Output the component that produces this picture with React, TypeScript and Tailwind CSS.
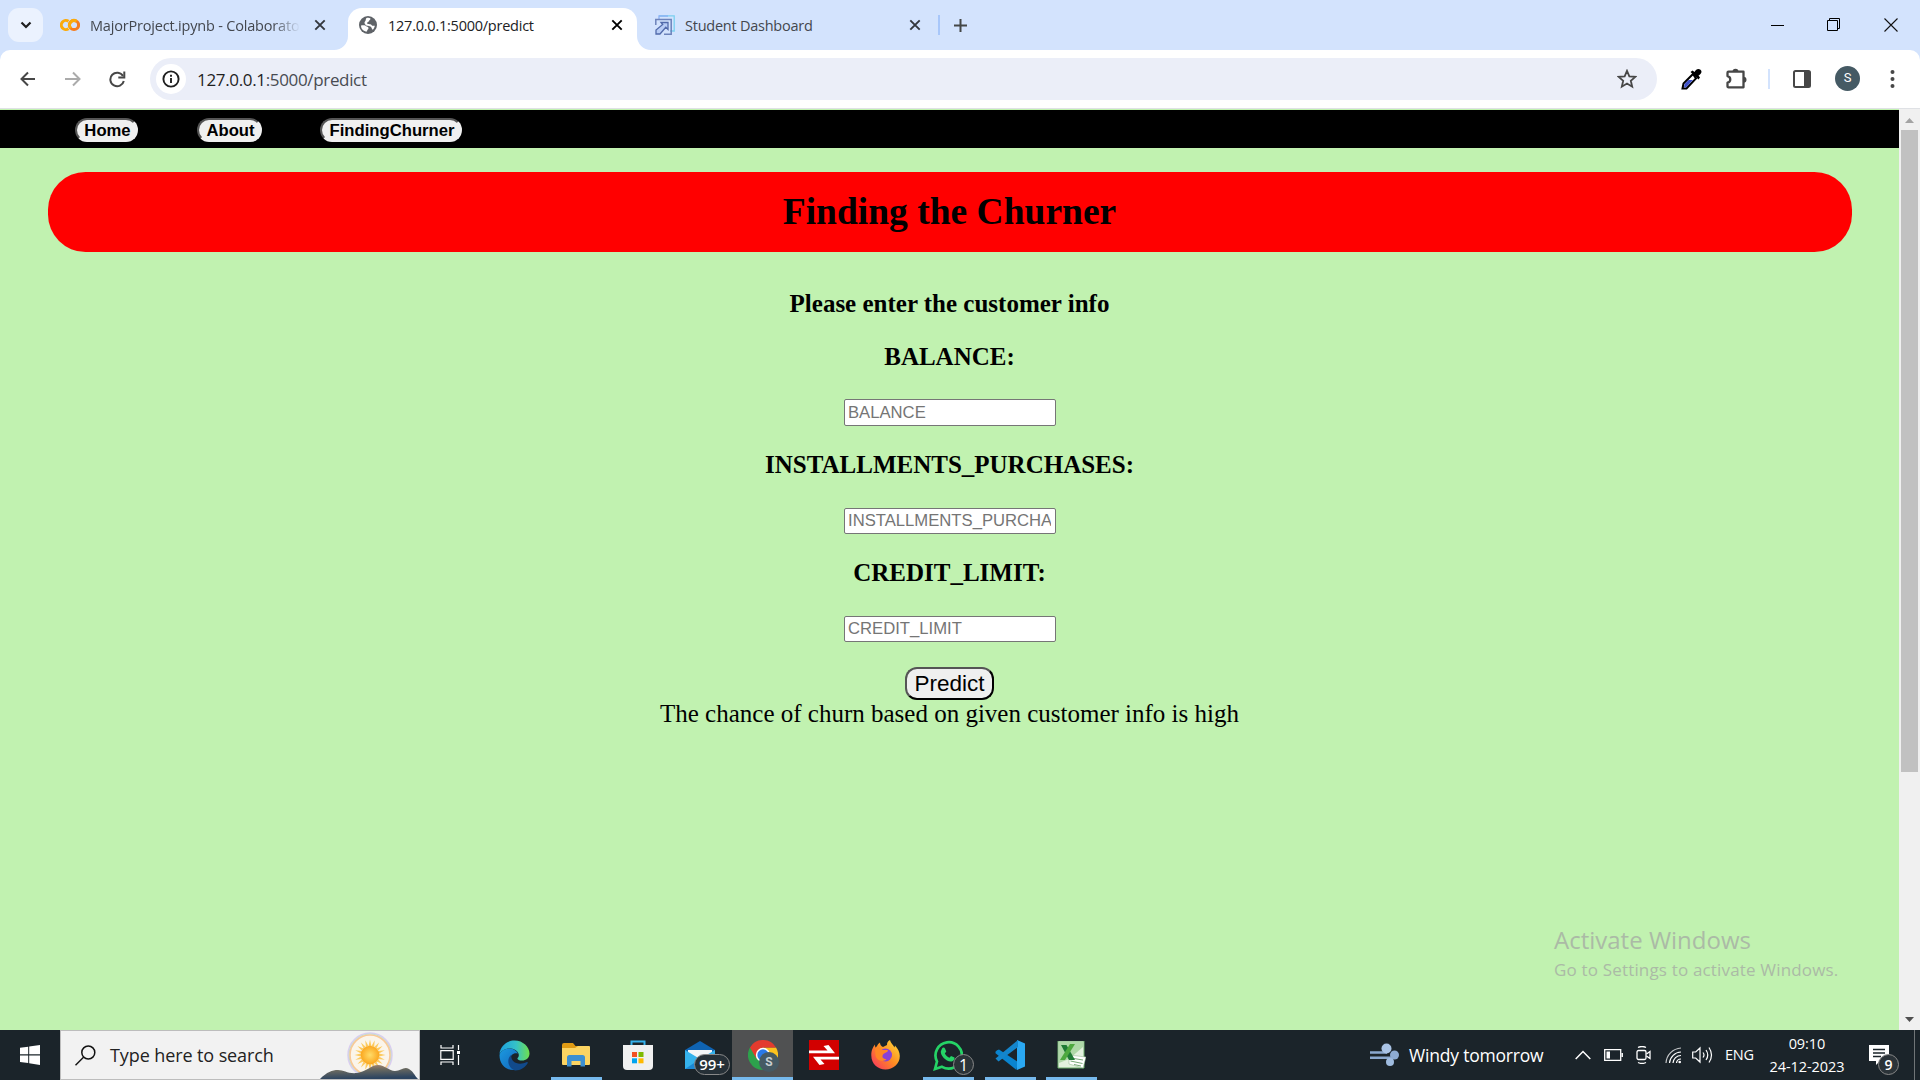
import type { ReactNode } from 'react';

const ui = "font-['Open_Sans','Noto_Sans',sans-serif]";

function CloseX({ className = 'text-[#33373d]' }: { className?: string }) {
  return (
    <svg width="12" height="12" viewBox="0 0 12 12" className={className}>
      <path d="M1.3 1.3 10.7 10.7M10.7 1.3 1.3 10.7" stroke="currentColor" strokeWidth="1.900" fill="none" />
    </svg>
  );
}

function TabStrip() {
  return (
    <div className="flex h-[50px] bg-[#d3e3fd]">
      <div className="flex w-[348px] items-center pl-2">
        <button className="flex h-[34px] w-[35px] items-center justify-center rounded-[11px] bg-[#ebf2fe]">
          <svg width="12" height="8" viewBox="0 0 12 8">
            <path d="M1.5 1.5 6 6l4.500-4.500" stroke="#1f1f1f" strokeWidth="2.200" fill="none" />
          </svg>
        </button>
        <svg className="ml-[17px]" width="20" height="14" viewBox="0 0 20 14">
          <circle cx="14" cy="7" r="4.600" stroke="#f57c1d" strokeWidth="3" fill="none" />
          <path d="M8.500 3.200A4.600 4.600 0 1 0 8.500 10.800" stroke="#fbab0a" strokeWidth="3" fill="none" />
          <path d="M10.700 10.200A4.600 4.600 0 0 1 16.500 3.200" stroke="#fbab0a" strokeWidth="3" fill="none" />
        </svg>
        <div className="ml-[10px] w-[210px] pt-px text-[14.500px] tracking-[-0.190px] whitespace-nowrap text-[#43474e] [mask-image:linear-gradient(to_right,black_87%,transparent_100%)]">
          MajorProject.ipynb - Colaborato
        </div>
        <span className="ml-[14px]"><CloseX /></span>
      </div>
      <div className="relative mt-2 flex h-[42px] w-[289px] items-center rounded-t-[14px] bg-white pr-[14px] pb-2 pl-[11px]">
        <svg className="absolute bottom-0 left-[-14px]" width="14" height="14"><path d="M14 0v14H0A14 14 0 0 0 14 0" fill="#fff" /></svg>
        <svg className="absolute right-[-14px] bottom-0" width="14" height="14"><path d="M0 0v14h14A14 14 0 0 1 0 0" fill="#fff" /></svg>
        <svg width="18" height="18" viewBox="0 0 18 18">
          <circle cx="9" cy="9" r="9" fill="#5f6368" />
          <path d="M2 9.500c2-.5 4.500-.5 5 .5s2.500.5 2.500 2-1.500 1.500-1.500 3.500C4.500 15.500 2 13 2 9.500ZM7.500 2c2-.5 3 0 4 .5 0 1.500-1.500 1.500-1.500 2.500S8 6 8 7.200s3.500.3 4.500 1.800 2.500.5 3.300.8c-.3 1.700-1 3-2 4-1-.5-1-2-2-3s-3.300-.2-4.800-1.500S5 6.500 6 5.500 6.500 3 7.500 2Z" fill="#fff" />
        </svg>
        <span className="ml-[11px] pt-px text-[14.500px] tracking-[-0.240px] text-[#202124]">127.0.0.1:5000/predict</span>
        <span className="ml-auto"><CloseX className="text-black" /></span>
      </div>
      <div className="flex flex-1 items-center pl-[18px]">
        <svg width="20" height="20" viewBox="0 0 20 20" fill="none">
          <path d="M4 .8h15.200V16H15" stroke="#7bd0f0" strokeWidth="1.300" />
          <path d="M4 4V1h9" stroke="#8cb2f4" strokeWidth="1.300" />
          <path d="M.8 10V4.500h15.400v14.700H9" stroke="#6d83bb" strokeWidth="1.500" />
          <path d="M6 7.500h7v7l-2.200-2.200L5 19H1v-4l6.700-5.500Z" fill="#b8cdf6" stroke="#526bab" strokeWidth="1.300" />
        </svg>
        <span className="ml-[10px] w-[224px] pt-px text-[14.500px] tracking-[-0.240px] text-[#43474e]">Student Dashboard</span>
        <CloseX />
        <span className="ml-[17px] h-5 w-[2px] bg-[#a8c7fa]" />
        <svg className="ml-[14px]" width="13" height="13"><path d="M6.500 0v13M0 6.500h13" stroke="#444746" strokeWidth="2" /></svg>
        <div className="mr-[22px] ml-auto flex items-center">
          <svg width="14" height="14"><path d="M1 7.500h13" stroke="#000" /></svg>
          <svg className="ml-[43px]" width="14" height="14" fill="none" stroke="#000"><path d="M.5 2.500h10v10H.5ZM2.500 2.500v-2h10v10h-2" /></svg>
          <svg className="ml-[43px]" width="14" height="14"><path d="m.5.5 13 13m0-13-13 13" stroke="#111" strokeWidth="1.100" /></svg>
        </div>
      </div>
    </div>
  );
}

function Toolbar() {
  return (
    <div className="bg-[#d3e3fd]">
      <div className="flex h-[59px] items-center rounded-t-[10px] border-b border-[#dfe1e5] bg-white pl-5">
        <svg width="16" height="16" fill="none" stroke="#474747" strokeWidth="2"><path d="M15 8H2M8 1.500 1.500 8 8 14.500" /></svg>
        <svg className="ml-[29px]" width="16" height="16" fill="none" stroke="#ababab" strokeWidth="2"><path d="M0 8h13.500M8 1.500 14.500 8 8 14.500" /></svg>
        <svg className="ml-[28px]" width="17" height="17" viewBox="0 0 17 17" fill="none" stroke="#474747" strokeWidth="2"><path d="M14 5A6.800 6.800 0 1 0 14.800 10" /><path d="M15.300.5v6H9.300" /></svg>
        <div className="ml-[24px] flex h-[42px] w-[1507px] items-center rounded-full bg-[#ebeef8] pr-5 pl-[6px]">
          <span className="flex size-[30px] items-center justify-center rounded-full bg-white">
            <svg width="18" height="18"><circle cx="9" cy="9" r="7.600" fill="none" stroke="#1f1f1f" strokeWidth="1.900" /><path d="M9 8v5M9 4.700v2" stroke="#1f1f1f" strokeWidth="1.900" /></svg>
          </span>
          <span className="ml-[11px] pt-px text-[17px] tracking-[-0.340px] text-[#484b52]"><span className="text-[#1f1f1f]">127.0.0.1</span>:5000/predict</span>
          <svg className="ml-auto" width="20" height="20" viewBox="0 0 20 20"><path d="m10 1.800 2.350 5.550 6 .5-4.550 3.950 1.380 5.850L10 14.550 4.820 17.650 6.200 11.800 1.650 7.850l6-.5Z" fill="none" stroke="#474747" strokeWidth="1.800" /></svg>
        </div>
        <svg className="ml-[24px]" width="21" height="22" viewBox="0 0 21 22">
          <path d="M12 6 2.500 15.500 1.500 20.500h4L15 10.500Z" fill="#fff" stroke="#000" strokeWidth="2" />
          <path d="M7.500 12h4.500l-7 7.500H3l.5-3.500Z" fill="#3f51c8" />
          <path d="m9.500 4 2-1.500 2 1.500C15 1 17.500 0 19.500 1.800s.8 4-2 5.700l1.500 2-1.500 2Z" fill="#000" />
        </svg>
        <svg className="ml-[24px]" width="22" height="22" viewBox="0 0 22 22">
          <path d="M2.500 3.700h15v15.600h-15q-1 0-1-1v-3.600c3.700-1 3.700-5.600 0-6.600V4.700q0-1 1-1Z" fill="none" stroke="#474747" strokeWidth="2.300" strokeLinejoin="round" />
          <path d="M6.500 3.700a3 3 0 0 1 6 0M17.500 8.700a3 3 0 0 1 0 6" fill="#474747" />
        </svg>
        <span className="ml-[20px] h-5 w-[2px] bg-[#d3e3fd]" />
        <svg className="ml-[23px]" width="18" height="18"><rect x="1" y="1" width="16" height="16" rx="1.500" fill="none" stroke="#474747" strokeWidth="2" /><path d="M11 1h6v16h-6Z" fill="#474747" /></svg>
        <span className="ml-[24px] flex size-[25px] -translate-y-px items-center justify-center rounded-full bg-[#455a64] font-['Roboto',sans-serif] text-[13px] text-white">S</span>
        <svg className="ml-[30px]" width="5" height="20" fill="#474747"><circle cx="2.500" cy="3" r="2" /><circle cx="2.500" cy="10" r="2" /><circle cx="2.500" cy="17" r="2" /></svg>
      </div>
    </div>
  );
}

function NavButton({ className, children }: { className: string; children: ReactNode }) {
  return (
    <button className={`h-6 rounded-[12px] border-2 border-t-[#555] border-r-[#f0f0f0] border-b-[#f0f0f0] border-l-[#555] bg-[#f0f0f0] pt-px pl-[2px] text-[16.670px] leading-[19px] font-bold text-black ${className}`}>
      {children}
    </button>
  );
}

function Field({ name, inputClass }: { name: string; inputClass: string }) {
  return (
    <>
      <label className="mt-[25px] font-bold">{name}:</label>
      <input
        placeholder={name}
        className={`w-[212px] rounded-[2px] border border-[#767676] bg-white px-[3.500px] font-['Liberation_Sans',Arial,sans-serif] text-[16.670px] placeholder:text-[#757575] ${inputClass}`}
      />
    </>
  );
}

function Page() {
  return (
    <div className="relative flex h-[921px] bg-[#c1f2b0] text-black">
      <main className="flex w-[1899px] flex-col items-center pt-px font-['Liberation_Serif','Times_New_Roman',serif] text-[25px] leading-7">
        <nav className="flex h-[38px] w-full items-center bg-black pt-[2px] pl-[75px] font-['Liberation_Sans',Arial,sans-serif]">
          <NavButton className="w-[63px]">Home</NavButton>
          <NavButton className="ml-[59px] w-[65px]">About</NavButton>
          <NavButton className="ml-[58px] w-[142px]">FindingChurner</NavButton>
        </nav>
        <h1 className="mt-6 flex h-20 w-[1804px] items-center justify-center rounded-[37.500px] bg-[#ff0000] text-[37.500px] font-bold">Finding the Churner</h1>
        <p className="mt-[38px] font-bold">Please enter the customer info</p>
        <Field name="BALANCE" inputClass="mt-7 h-[27px]" />
        <Field name="INSTALLMENTS_PURCHASES" inputClass="mt-[29px] h-[26px]" />
        <Field name="CREDIT_LIMIT" inputClass="mt-[29px] h-[26px]" />
        <button className="mt-[25px] h-[33px] w-[89px] rounded-[12px] border-2 border-t-[#555] border-r-black border-b-black border-l-[#555] bg-[#efefef] font-['Liberation_Sans',Arial,sans-serif] text-[22.500px] leading-[28px]">Predict</button>
        <p>The chance of churn based on given customer info is high</p>
      </main>
      <aside className="flex w-[21px] flex-col items-center bg-[#f0f0f0]">
        <svg width="21" height="21"><path d="M6 14h9l-4.500-5Z" fill="#a3a3a3" /></svg>
        <div className="h-[642px] w-[17px] bg-[#c1c1c1]" />
        <svg className="mt-auto" width="21" height="21"><path d="M6 8h9l-4.500 5Z" fill="#505050" /></svg>
      </aside>
      <div className={`absolute top-[813px] left-[1554px] whitespace-nowrap text-[#abbaa6] ${ui}`}>
        <p className="text-[24px] leading-[36px]">Activate Windows</p>
        <p className="text-[17px] leading-[24px] tracking-[0.170px]">Go to Settings to activate Windows.</p>
      </div>
    </div>
  );
}

function TaskItem({ children, className = '', line = false }: { children: ReactNode; className?: string; line?: boolean }) {
  return (
    <div className={`relative flex h-[50px] w-[62px] items-center justify-center ${className}`}>
      {children}
      {line && <span className="absolute bottom-0 h-[3px] w-[51px] bg-[#76b9ed]" />}
    </div>
  );
}

function Taskbar() {
  return (
    <div className={`flex h-[50px] items-center bg-[#1b242a] text-white ${ui}`}>
      <div className="flex w-[60px] justify-center">
        <svg width="20" height="20" fill="#fff"><path d="M0 2.800 8.200 1.700v7.600H0ZM9.200 1.500 20 0v9.300H9.200ZM0 10.400h8.200V18L0 16.900ZM9.200 10.400H20V20L9.200 18.300Z" /></svg>
      </div>
      <div className="flex h-[50px] w-[360px] items-center border border-[#bdbdbd] bg-[#f2f2f2] pl-[14px]">
        <svg width="21" height="21" fill="none" stroke="#111" strokeWidth="1.500"><circle cx="13.300" cy="7.500" r="6.500" /><path d="M8.500 12.300.5 20.300" /></svg>
        <span className="ml-[14px] w-[210px] text-[18px] tracking-[-0.100px] text-[#222]">Type here to search</span>
        <svg className="shrink-0" width="99" height="48" viewBox="0 0 99 48">
          <defs>
            <radialGradient id="sun"><stop offset="0" stopColor="#ffdc69" /><stop offset="1" stopColor="#fba71f" /></radialGradient>
            <linearGradient id="hill" x2="0.200" y2="1"><stop offset="0" stopColor="#b08a72" /><stop offset=".4" stopColor="#6b6a60" /><stop offset="1" stopColor="#2c4460" /></linearGradient>
          </defs>
          <circle cx="50" cy="24" r="22" fill="#fbf5ea" stroke="#dacdf0" strokeWidth="1.500" />
          <circle cx="50" cy="24" r="21" fill="none" stroke="#b9dfd4" strokeWidth="1" />
          <circle cx="50" cy="24" r="20" fill="none" stroke="#f9c896" strokeWidth="1.600" />
          {Array.from({ length: 20 }, (_, i) => (
            <path key={i} d="m48.600 15 1.400-6.500 1.400 6.500Z" fill="#fcca5e" transform={`rotate(${i * 18} 50 24)`} />
          ))}
          <circle cx="50" cy="24" r="9.300" fill="url(#sun)" />
          <path d="M0 48C7 41 12 39 18 39s10 4 19 3 14-8 21-8 11 6 17 6 9-5 14-2 5 6 9 10Z" fill="url(#hill)" />
        </svg>
      </div>
      <div className="flex w-[63px] justify-center pr-[2px]">
        <svg width="21" height="20" fill="none" stroke="#fff" strokeWidth="1.200"><path d="M1 0v3h12V0M1 20v-3h12v3M.8 5.700h12.400v8.600H.8ZM18.500 0v5M18.500 10v10" /><path d="M17 6h3v3h-3Z" fill="#fff" stroke="none" /></svg>
      </div>

      <TaskItem>
        <svg width="31" height="31" viewBox="0 0 31 31">
          <defs>
            <linearGradient id="edgeA" x1="0" x2="1"><stop offset="0" stopColor="#1ca0df" /><stop offset=".55" stopColor="#35c1c8" /><stop offset="1" stopColor="#6fe04d" /></linearGradient>
            <linearGradient id="edgeB" y2="1"><stop offset="0" stopColor="#1b9ae0" /><stop offset="1" stopColor="#1262b8" /></linearGradient>
          </defs>
          <path d="M.5 14C1 6 8 .5 15.500.5 24 .5 30.500 7 30.500 13.500c0 4.500-3.500 7-7.500 7-3 0-5-1-4.500-2.500 1.500-1.500 1.500-3 1-4.500C18 10 14.500 8.500 10.500 8.500 6 8.500 2 11 .5 14Z" fill="url(#edgeA)" />
          <path d="M.5 15C1.500 11 6 8.500 10.500 8.500c4 0 7 2 8.500 5-5-1.500-9 3-7.500 7.500 1.500 5 6 7.500 10.500 6.500-8 6-21.500 1.500-21.500-12.500Z" fill="url(#edgeB)" />
          <path d="M12.500 14.500c-1.500 6.500 5.500 12 15.500 7.500 1 0 1 .5.500 1.500C26.500 27 22 30.500 16 30.500 9 28 7 19 12.500 14.500Z" fill="#114a8b" />
        </svg>
      </TaskItem>
      <TaskItem line>
        <svg width="28" height="24" viewBox="0 0 28 24"><path d="M0 2q0-2 2-2h9l2.500 3H26q1 0 1 1v5H0Z" fill="#e09b14" /><path d="M0 5h13l3-2h11q1 0 1 1v17q0 1-1 1H1q-1 0-1-1Z" fill="#fcd462" /><path d="M5 23.500V14.500Q5 12 7.500 12h13q2.500 0 2.500 2.500v9h-4.500V18h-9v5.500Z" fill="#3d8fd1" /></svg>
      </TaskItem>
      <TaskItem>
        <svg width="30" height="30" viewBox="0 0 30 30"><path d="M8.500 7V1.500h13V7" fill="none" stroke="#35b1ec" strokeWidth="2" /><path d="M0 5h30v21q0 4-4 4H4q-4 0-4-4Z" fill="#f0f0f0" /><path d="M9 12h5v5H9Z" fill="#f25022" /><path d="M15.500 12h5v5h-5Z" fill="#7fba00" /><path d="M9 18.300h5v5H9Z" fill="#00a4ef" /><path d="M15.500 18.300h5v5h-5Z" fill="#ffb900" /></svg>
      </TaskItem>
      <TaskItem>
        <svg width="30" height="28" viewBox="0 0 30 28"><path d="M0 9 15 0l15 9v19H0Z" fill="#0f63b2" /><path d="M3 9h24v10H3Z" fill="#f4f5f7" /><path d="m0 9 15 9L30 9v19H0Z" fill="#35b2ec" /><path d="m0 28 18-12L30 28Z" fill="#1c89d5" /></svg>
        <span className="absolute top-[24px] left-[25px] flex h-[21px] w-[36px] items-center justify-center rounded-full border border-[#888] bg-[#263037] text-[15px] font-semibold">99+</span>
      </TaskItem>
      <TaskItem className="ml-px w-[61px]! bg-[#505152]">
        <svg width="30" height="30" viewBox="0 0 30 30"><path d="M2 7.500A15 15 0 0 0 15 30l6.500-11.250L15 15Z" fill="#2da14c" /><path d="M15 7.500h13A15 15 0 0 1 15 30l6.500-11.250Z" fill="#fcc31e" /><path d="M2 7.500 8.500 18.800 15 7.500h13A15 15 0 0 0 2 7.500" fill="#e33b2e" /><circle cx="15" cy="15" r="7.200" fill="#fff" /><circle cx="15" cy="15" r="5.700" fill="#2979e8" /></svg>
        <span className="absolute top-[22px] left-[27px] flex size-5 items-center justify-center rounded-full bg-[#455a64] font-['Roboto',sans-serif] text-[12px] font-bold text-[#c8ced1]">S</span>
        <span className="absolute bottom-0 h-[3px] w-full bg-[#76b9ed]" />
      </TaskItem>
      <TaskItem>
        <svg width="30" height="30"><path d="M0 0h30v30H0Z" fill="#d20000" /><path d="M0 10.500h18.500L14.500 6l5-1 6.500 8.200H0ZM30 19.500H11.500L15.500 24l-5 1L4 16.800h26Z" fill="#fff" /></svg>
      </TaskItem>
      <TaskItem className="pr-px">
        <svg width="29" height="30" viewBox="0 0 29 30">
          <defs><linearGradient id="fox" x1="1" y1="0" x2="0" y2="1"><stop offset="0" stopColor="#ffe23b" /><stop offset=".5" stopColor="#ff8a22" /><stop offset="1" stopColor="#f72c68" /></linearGradient></defs>
          <path d="M16 5c0-2 .5-4 3-5 .5 3 3 4.500 4.500 7.500l.5-2c3 3 4.800 7 4.800 10.500C28.800 24 22 29.500 14.500 29.500S.3 24 .3 15.500C.3 10 2 7 4 4.500c0 1 0 2 .5 3C6 7 6.500 4 9 2.500 9 4.500 10 6 12 7Z" fill="url(#fox)" />
          <circle cx="14.500" cy="15" r="6.500" fill="#8a42d5" />
          <path d="M4 8c4 0 4 1.500 7 2s6-1 6 1c-1 2-4 1.500-5 3.500s-1 4 3.500 5c-4 3-10 1-11-4Z" fill="#ff8725" />
        </svg>
      </TaskItem>
      <TaskItem line>
        <svg width="30" height="31" viewBox="0 0 30 31"><path d="M2 29 4 21.500A13.200 13.200 0 1 1 9 26.800Z" fill="none" stroke="#25d366" strokeWidth="2.700" /><path d="M9 8.500c1-1.500 2.500-1 3 0l1.300 3-1.500 2c1 2 2.500 3.200 4.700 4.200l1.500-1.800 3.500 1.600c.5 2-1 3.500-3 4C13 22 7.500 15.500 7.800 11.500Z" fill="#25d366" /></svg>
        <span className="absolute top-[24px] left-[36px] flex size-[21px] items-center justify-center rounded-full border border-[#888] bg-[#2b3338] text-[16px]">1</span>
      </TaskItem>
      <TaskItem line>
        <svg width="30" height="30" viewBox="0 0 30 30"><path d="M2 10.300.5 11.800v1.400L21.500 30 23 22 4 9.500Z" fill="#0a84cf" /><path d="m22 0 8 3.500v23L22 30Z" fill="#2aa8f2" /><path d="M3.500 21.500 23 7V0L.5 18.500Z" fill="#1485cb" /></svg>
      </TaskItem>
      <TaskItem line className="pr-[2px]">
        <svg width="29" height="28" viewBox="0 0 29 28">
          <path d="M1 0h26v27H1Z" fill="#e2f1de" stroke="#6aac68" /><path d="M2 1h24v5L12 18 2 22Z" fill="#9ccf94" opacity=".75" />
          <path d="M12 14 29 16l-3 11-14-4Z" fill="#fff" stroke="#8bb38a" strokeWidth=".5" /><path d="m14 17 12 2M13.500 20l12 2.500M17 23.500l7 1.500" stroke="#78a878" />
          <path d="M4 4h5.500L18 19h-6Z" fill="#1f7a35" /><path d="M13 3h5L8 19H3Z" fill="#4ea83f" />
        </svg>
      </TaskItem>

      <div className="ml-auto flex h-full items-center">
        <svg width="29" height="24" viewBox="0 0 29 24"><path d="M0 9.500h17M0 14.800h26" stroke="#8aa8cf" strokeWidth="2.500" /><circle cx="16.500" cy="5.500" r="5" fill="#a9c3e5" /><circle cx="24.500" cy="12" r="4.500" fill="#8eacd3" /><circle cx="20" cy="19" r="4" fill="#9fbce0" /></svg>
        <span className="ml-[10px] w-[166px] text-[17.500px] tracking-[-0.200px]">Windy tomorrow</span>
        <svg width="16" height="10" fill="none" stroke="#fff" strokeWidth="1.500"><path d="m.7 9 7.300-7.500L15.300 9" /></svg>
        <svg className="ml-[13px]" width="19" height="12" fill="none" stroke="#fff" strokeWidth="1.300"><path d="M.7.7h16v10.600H.7ZM18.300 4v4" /><path d="M2.500 2.500h3.500v7H2.500Z" fill="#fff" stroke="none" /></svg>
        <svg className="ml-[13px]" width="15" height="18" fill="none" stroke="#fff" strokeWidth="1.300"><rect x="1" y="4.500" width="9" height="9" rx="1.500" /><path d="m10.500 8 3.500-2.500v7L10.500 10M2 1.500q4-2 8 0M2 16.500q4 2 8 0" /></svg>
        <svg className="ml-[14px]" width="17" height="17" fill="none" stroke="#fff" strokeWidth="1.200"><path d="M1 16A16 16 0 0 1 16 1" opacity=".75" /><path d="M4.500 16A12 12 0 0 1 16 5M8 16a8 8 0 0 1 8-7.500M11.500 16a4.500 4.500 0 0 1 4.500-4" /><circle cx="14.700" cy="15" r="1.300" fill="#fff" stroke="none" /></svg>
        <svg className="ml-[10px]" width="21" height="18" fill="none" stroke="#fff" strokeWidth="1.200"><path d="M.7 6v6h3L8 16V2L3.700 6ZM11 6.500q2 2.500 0 5M14 4q3.500 5 0 10M17 1.500q5 7.500 0 15" /></svg>
        <span className="ml-[12px] w-[31px] text-[14.500px] tracking-[-0.250px]">ENG</span>
        <div className="ml-[12px] w-[78px] text-center text-[14.500px] leading-[23px] tracking-[-0.050px] whitespace-nowrap">
          <p>09:10</p>
          <p>24-12-2023</p>
        </div>
        <div className="relative ml-[23px] h-[20px] w-[45px]">
          <svg width="21" height="20"><path d="M0 0h20v16h-9l-4 4v-4H0Z" fill="#fff" /><path d="M4 4.500h12M4 8h12M4 11.500h8" stroke="#1b242a" strokeWidth="1.300" /></svg>
          <span className="absolute top-[9px] left-[9px] flex size-[21px] items-center justify-center rounded-full border border-[#888] bg-[#2b3338] text-[14px] font-semibold">9</span>
        </div>
        <span className="mr-[5px] h-full w-px bg-[#707577]" />
      </div>
    </div>
  );
}

export default function App() {
  return (
    <div className="flex h-[1080px] w-[1920px] flex-col overflow-hidden bg-white">
      <header className={ui}>
        <TabStrip />
        <Toolbar />
      </header>
      <Page />
      <Taskbar />
    </div>
  );
}
